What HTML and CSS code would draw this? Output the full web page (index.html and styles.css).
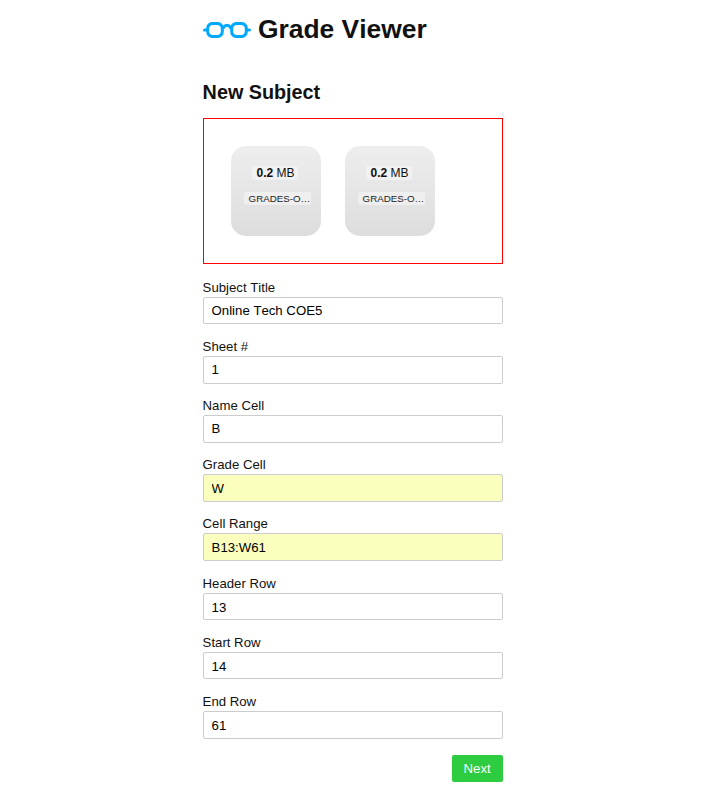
FILE: index.html
```html
<!DOCTYPE html>
<html lang="en">
<head>
<meta charset="utf-8">
<title>Grade Viewer</title>
<link rel="stylesheet" href="styles.css">
</head>
<body>
<main class="page">
  <header class="brand">
    <svg class="logo" viewBox="0 0 48 18" width="48" height="18" fill="none" stroke="#03a9ff" stroke-width="3" stroke-linecap="round">
      <path d="M9 2.500H15Q19.300 3.300 19.300 7.500V10.500Q19.300 14.700 15 15.500H9Q4.700 14.700 4.700 10.500V7.500Q4.700 3.300 9 2.500Z"/>
      <path d="M33 2.500H39Q43.300 3.300 43.300 7.500V10.500Q43.300 14.700 39 15.500H33Q28.700 14.700 28.700 10.500V7.500Q28.700 3.300 33 2.500Z"/>
      <path d="M1.500 9H4M44 9H46.500M20 7Q24 1.500 28 7"/>
    </svg>
    <h1>Grade Viewer</h1>
  </header>
  <h2>New Subject</h2>
  <div class="dropzone">
    <div class="preview"><div class="size"><span><strong>0.2</strong> MB</span></div><div class="filename"><span>GRADES-O…</span></div></div>
    <div class="preview"><div class="size"><span><strong>0.2</strong> MB</span></div><div class="filename"><span>GRADES-O…</span></div></div>
  </div>
  <form>
    <label class="field">Subject Title<input type="text" value="Online Tech COE5"></label>
    <label class="field">Sheet #<input type="text" value="1"></label>
    <label class="field">Name Cell<input type="text" value="B"></label>
    <label class="field">Grade Cell<input class="filled" type="text" value="W"></label>
    <label class="field">Cell Range<input class="filled" type="text" value="B13:W61"></label>
    <label class="field">Header Row<input class="row-number" type="text" value="13"></label>
    <label class="field">Start Row<input class="row-number" type="text" value="14"></label>
    <label class="field">End Row<input class="row-number" type="text" value="61"></label>
    <div class="actions"><button type="button">Next</button></div>
  </form>
</main>
</body>
</html>
```
FILE: styles.css
```css
* { box-sizing: border-box; }
body {
  margin: 0;
  background: #fff;
  color: #111;
  font: 13.2px/20px "Liberation Sans", Arial, sans-serif;
  font-kerning: none;
}
.page { width: 300.5px; margin-left: 202.6px; padding-top: 13px; }
.brand { display: flex; align-items: center; gap: 7.400px; height: 32px; }
.logo { margin-top: 1px; }
h1 { margin: 0; font-size: 26.4px; line-height: 32px; }
h2 { margin: 35px 0 13px; font-size: 19.8px; line-height: 25px; }
.dropzone {
  display: flex;
  gap: 24px;
  height: 146px;
  padding: 27px;
  border: 1px solid #f00;
}
.preview {
  width: 90px;
  height: 90px;
  padding-top: 18px;
  border-radius: 15px;
  background: linear-gradient(#eee, #ddd);
}
.size { font-size: 12px; line-height: 18px; padding-left: 21px; }
.size span { display: inline-block; padding: 0 3px 0 5px; border-radius: 3px; background: rgba(255,255,255,.4); line-height: 14px; }
.filename { margin: 10px 0 0 13px; font-size: 9.750px; line-height: 13px; color: #222; }
.filename span { display: block; width: 67px; padding-left: 5px; border-radius: 3px 0 0 3px; background: rgba(255,255,255,.4); white-space: nowrap; }
form { padding-top: 13.800px; }
.field { display: block; height: 59.17px; }
.field input {
  display: block;
  width: 100%;
  height: 27.700px;
  margin: -1px 0 0;
  padding: 0 8px;
  border: 1px solid #ccc;
  border-radius: 2px;
  background: #fff;
  color: #000;
  font: inherit;
  font-kerning: none;
}
.field .filled { background: #faffbd; }
.field .row-number { padding-top: 1.400px; }
.actions { display: flex; justify-content: flex-end; padding-top: 3.800px; }
button {
  width: 51px;
  height: 27px;
  padding: 1px 1px 0 0;
  border: 0;
  border-radius: 2px;
  background: #2ecc40;
  color: #fff;
  font: inherit;
}
```
